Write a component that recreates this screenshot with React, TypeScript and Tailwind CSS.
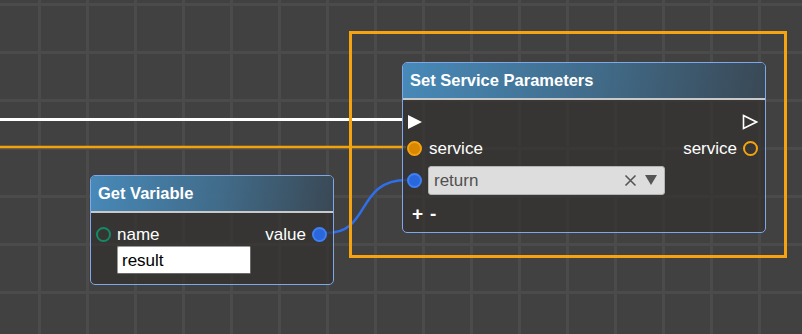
import React from "react";

const font = "font-['Liberation_Sans',Arial,sans-serif]";

function Header({ title }: { title: string }) {
  return (
    <div className="h-[37px] flex items-center pl-[7px] rounded-t-[4px] bg-[linear-gradient(100deg,rgba(72,142,192,0.95),rgba(66,112,145,0.9)_55%,rgba(58,74,88,0.9))] border-b-[2px] border-[#c9c9c9]">
      <span className="text-white font-bold text-[16.5px] leading-none">{title}</span>
    </div>
  );
}

export default function App() {
  return (
    <div
      className={`${font} relative w-[802px] h-[334px] overflow-hidden bg-[#414141] bg-[linear-gradient(to_right,#4b4b4b_3px,transparent_3px),linear-gradient(to_bottom,#4b4b4b_3px,transparent_3px)] bg-size-[48px_48px] bg-position-[38px_3px]`}
    >
      {/* wires */}
      <svg className="absolute inset-0" width={802} height={334}>
        <line x1={0} y1={119.5} x2={403} y2={119.5} stroke="#ffffff" strokeWidth={3} />
        <line x1={0} y1={147} x2={406} y2={147} stroke="#f2a30c" strokeWidth={2.5} />
        <path d="M 326 233 C 372 233, 355 180, 407 180" fill="none" stroke="#2f6fe8" strokeWidth={2.5} />
      </svg>

      {/* selection rectangle */}
      <div className="absolute left-[349px] top-[31px] w-[438px] h-[227px] border-[3px] border-[#f5a30f]" />

      {/* Set Service Parameters */}
      <div className="absolute left-[402px] top-[62px] w-[364px] h-[171px] rounded-[5px] border border-[#7ea8ea] bg-[rgba(50,48,46,0.72)]">
        <Header title="Set Service Parameters" />
        <div className="pt-[11px] pl-[4px] pr-[7px]">
          <div className="h-[22px] flex items-center justify-between">
            <svg width={16} height={16} viewBox="0 0 16 16">
              <polygon points="1,1 15,8 1,15" fill="#ffffff" />
            </svg>
            <svg width={16} height={16} viewBox="0 0 16 16">
              <polygon points="1.5,1.5 14.5,8 1.5,14.5" fill="none" stroke="#ffffff" strokeWidth={1.6} />
            </svg>
          </div>
          <div className="h-[30px] flex items-center justify-between">
            <div className="flex items-center gap-[7px]">
              <div className="w-[15px] h-[15px] rounded-full bg-[#d98600] border-[2px] border-[#f5a30f]" />
              <span className="text-white text-[17px] leading-none">service</span>
            </div>
            <div className="flex items-center gap-[6px]">
              <span className="text-white text-[17px] leading-none">service</span>
              <div className="w-[15px] h-[15px] rounded-full border-[2.5px] border-[#f5a30f]" />
            </div>
          </div>
          <div className="h-[34px] flex items-center gap-[6px]">
            <div className="w-[15px] h-[15px] rounded-full bg-[#2a66dc] border-[2px] border-[#3f80f5]" />
            <div className="w-[237px] h-[29px] rounded-[3px] bg-[#dddddd] border border-[#b4b4b4] flex items-center pl-[5px] pr-[7px]">
              <span className="flex-1 text-[#505050] text-[17px] leading-none">return</span>
              <svg width={13} height={13} viewBox="0 0 13 13" className="mr-[8px]">
                <path d="M1.5 1.5 L11.5 11.5 M11.5 1.5 L1.5 11.5" stroke="#555555" strokeWidth={1.6} />
              </svg>
              <svg width={12} height={10} viewBox="0 0 12 10">
                <polygon points="0,0 12,0 6,10" fill="#555555" />
              </svg>
            </div>
          </div>
          <div className="h-[32px] flex items-center gap-[7px] pl-[5px] text-white font-bold text-[19px] leading-none">
            <span>+</span>
            <span>-</span>
          </div>
        </div>
      </div>

      {/* Get Variable */}
      <div className="absolute left-[90px] top-[175px] w-[244px] h-[110px] rounded-[5px] border border-[#7ea8ea] bg-[rgba(50,48,46,0.72)]">
        <Header title="Get Variable" />
        <div className="pt-[9px] pl-[5px] pr-[6px]">
          <div className="h-[24px] flex items-center justify-between">
            <div className="flex items-center gap-[6px]">
              <div className="w-[15px] h-[15px] rounded-full border-[2.5px] border-[#138a66]" />
              <span className="text-white text-[17px] leading-none">name</span>
            </div>
            <div className="flex items-center gap-[6px]">
              <span className="text-white text-[17px] leading-none">value</span>
              <div className="w-[15px] h-[15px] rounded-full bg-[#2a66dc] border-[2px] border-[#3f80f5]" />
            </div>
          </div>
          <div className="pl-[21px]">
            <div className="w-[134px] h-[28px] bg-white border border-[#9a9a9a] border-r-[#6a6a6a] border-b-[#6a6a6a] rounded-[2px] flex items-center pl-[4px]">
              <span className="text-black text-[17px] leading-none">result</span>
            </div>
          </div>
        </div>
      </div>
    </div>
  );
}
